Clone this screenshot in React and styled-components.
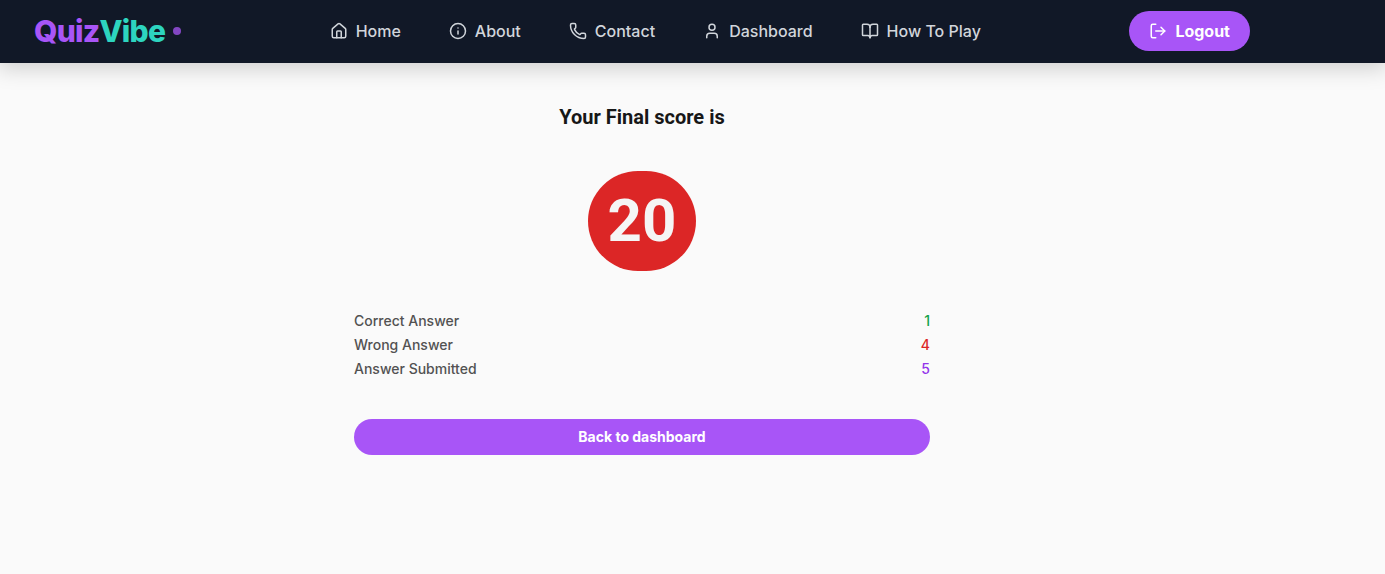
import React from "react";
import styled, { createGlobalStyle } from "styled-components";
import { House, Info, Phone, User, BookOpen, LogOut } from "lucide-react";

const GlobalStyle = createGlobalStyle`
  *, *::before, *::after { box-sizing: border-box; }
  body {
    margin: 0;
    background: #fafafa;
    color: #171717;
    font-family: Inter, "Liberation Sans", sans-serif;
    font-size: 16px;
    line-height: 24px;
  }
  button { font: inherit; border: 0; cursor: pointer; }
`;

const Header = styled.header`
  background: #111827;
  border-bottom: 1px solid #111827;
  box-shadow: 0 4px 20px 2px rgba(0, 0, 0, 0.17);
`;

const Shell = styled.div`
  max-width: 1284px;
`;

const Bar = styled.div`
  display: flex;
  align-items: center;
  justify-content: space-between;
  max-width: 1280px;
  min-height: 62px;
  margin: 0 auto;
  padding: 0 32px;
`;

const Brand = styled.a`
  display: flex;
  align-items: center;
  gap: 8px;
  color: #2dd4bf;
  font-size: 30px;
  font-weight: 800;
  line-height: 36px;
  letter-spacing: -0.025em;
  text-decoration: none;
`;

const BrandAccent = styled.span`
  color: #a855f7;
`;

const Dot = styled.span`
  width: 8px;
  height: 8px;
  border-radius: 50%;
  background: #a855f7;
  opacity: 0.75;
`;

const NavList = styled.ul`
  display: flex;
  gap: 48px;
  margin: 0;
  padding: 0;
  list-style: none;
`;

const NavLink = styled.a`
  display: flex;
  align-items: center;
  gap: 8px;
  color: #d1d5db;
  font-weight: 500;
  text-decoration: none;
`;

const LogoutButton = styled.button`
  display: flex;
  align-items: center;
  gap: 8px;
  padding: 8px 20px;
  border-radius: 9999px;
  background: #a855f7;
  color: #ffffff;
  font-weight: 700;
`;

const Result = styled.main`
  display: flex;
  flex-direction: column;
  align-items: center;
  gap: 40px;
  max-width: 576px;
  margin: 0 auto;
  padding: 40px 0;
`;

const Title = styled.h1`
  margin: 0;
  font-family: Roboto, sans-serif;
  font-size: 20px;
  font-weight: 700;
  line-height: 28px;
`;

const Score = styled.p`
  margin: 0;
  padding: 20px;
  border-radius: 9999px;
  background: #dc2626;
  color: #f5f5f5;
  font-family: Roboto, sans-serif;
  font-size: 60px;
  font-weight: 700;
  line-height: 60px;
`;

const Stats = styled.dl`
  align-self: stretch;
  display: flex;
  flex-direction: column;
  gap: 4px;
  margin: 0;
`;

const StatRow = styled.div`
  display: flex;
  justify-content: space-between;
  color: #525252;
  font-size: 14px;
  font-weight: 500;
  line-height: 20px;
`;

const StatValue = styled.dd`
  margin: 0;
  color: ${({ $color }) => $color};
`;

const BackButton = styled.button`
  align-self: stretch;
  padding: 8px 16px;
  border-radius: 9999px;
  background: #a855f7;
  color: #ffffff;
  font-size: 14px;
  font-weight: 700;
  line-height: 20px;
`;

const links = [
  { label: "Home", icon: House },
  { label: "About", icon: Info },
  { label: "Contact", icon: Phone },
  { label: "Dashboard", icon: User },
  { label: "How To Play", icon: BookOpen },
];

const stats = [
  { label: "Correct Answer", value: 1, color: "#16a34a" },
  { label: "Wrong Answer", value: 4, color: "#dc2626" },
  { label: "Answer Submitted", value: 5, color: "#9333ea" },
];

export default function App() {
  return (
    <>
      <GlobalStyle />
      <Header>
        <Shell>
          <Bar>
            <Brand href="#home">
              <span>
                <BrandAccent>Quiz</BrandAccent>Vibe
              </span>
              <Dot />
            </Brand>
            <nav>
              <NavList>
                {links.map(({ label, icon: Icon }) => (
                  <li key={label}>
                    <NavLink href="#">
                      <Icon size={18} aria-hidden="true" />
                      {label}
                    </NavLink>
                  </li>
                ))}
              </NavList>
            </nav>
            <LogoutButton type="button">
              <LogOut size={18} aria-hidden="true" />
              Logout
            </LogoutButton>
          </Bar>
        </Shell>
      </Header>
      <Shell>
        <Result>
          <Title>Your Final score is</Title>
          <Score>20</Score>
          <Stats>
            {stats.map(({ label, value, color }) => (
              <StatRow key={label}>
                <dt>{label}</dt>
                <StatValue $color={color}>{value}</StatValue>
              </StatRow>
            ))}
          </Stats>
          <BackButton type="button">Back to dashboard</BackButton>
        </Result>
      </Shell>
    </>
  );
}
